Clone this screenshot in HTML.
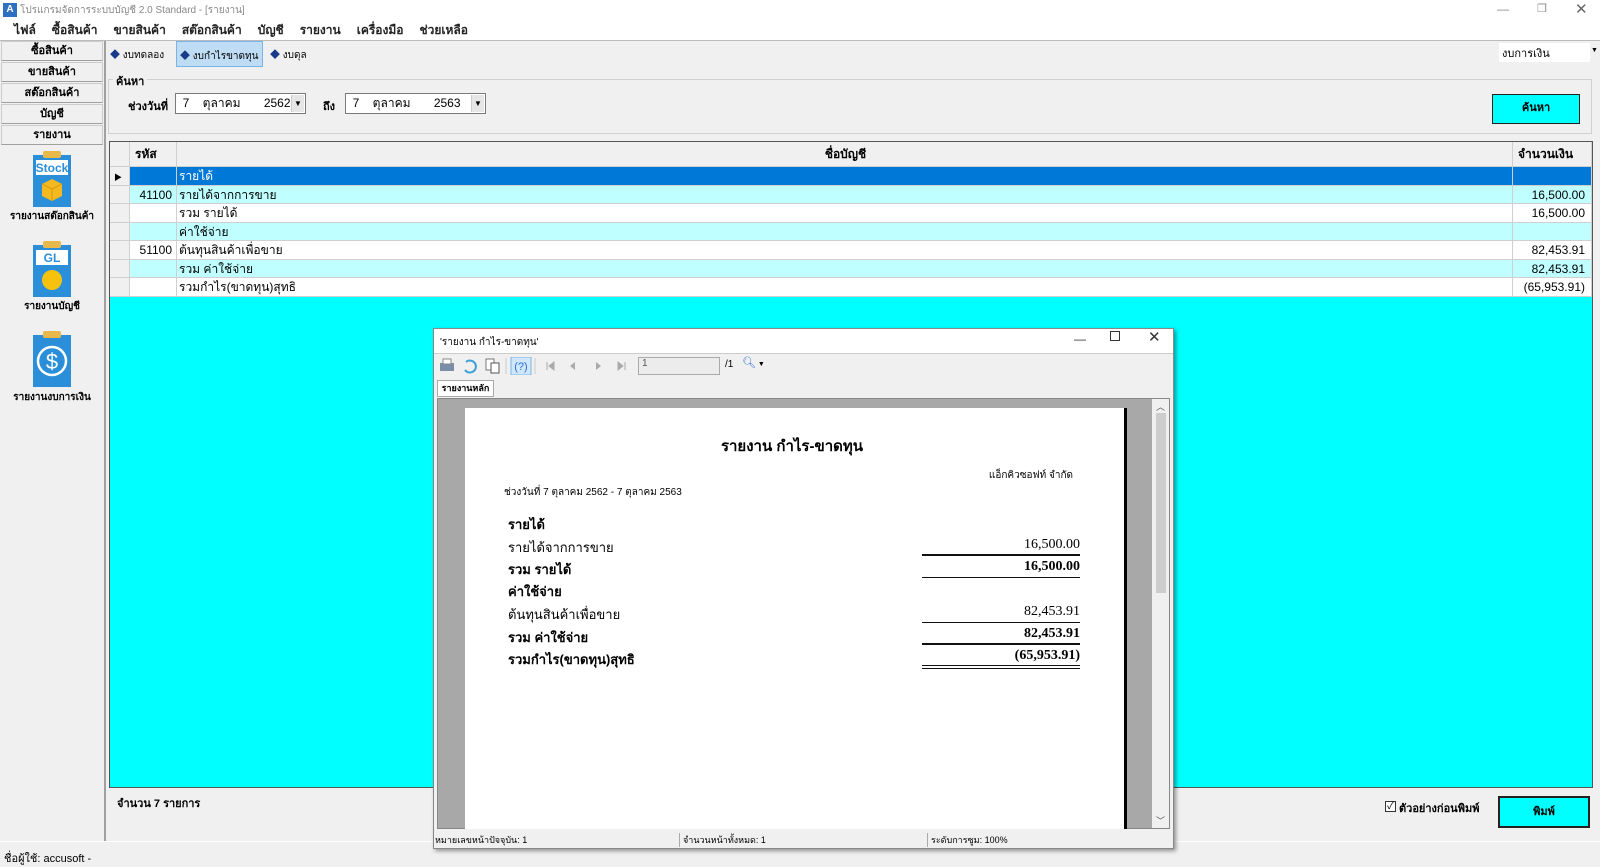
<!DOCTYPE html>
<html><head><meta charset="utf-8">
<style>
*{margin:0;padding:0;box-sizing:border-box}
body{width:1600px;height:866px;overflow:hidden;background:#f0f0f0;font-family:"Liberation Sans","Noto Sans CJK SC",sans-serif;font-size:12px;color:#000;position:relative}
.a{position:absolute;white-space:nowrap}
.menu span{margin-right:16px}
.lb{position:absolute;left:1px;width:102px;height:20px;background:#f0f0f0;border:1px solid #ccc;border-bottom-color:#a0a0a0;text-align:center;line-height:18px;font-weight:bold;font-size:11px}
.combo{position:absolute;height:21px;background:#fff;border:1px solid #7a7a7a;font-size:12px;line-height:19px;white-space:nowrap}
.combo .dd{position:absolute;right:1px;top:1px;width:13px;height:17px;background:#e6e6e6;border-left:1px solid #ccc;font-size:8px;text-align:center;line-height:17px}
.row{position:absolute;left:110px;width:1482px;height:18.5px;border-bottom:1px solid #cfcfcf;font-size:12px;line-height:18px}
.row div{position:absolute;top:0;height:100%;border-right:1px solid #cfcfcf}
.c0{left:0;width:20px;background:#f0f0f0}
.c1{left:20px;width:47px;text-align:right;padding-right:4px}
.c2{left:67px;width:1336px;padding-left:2px}
.c3{left:1403px;width:79px;text-align:right;padding-right:6px}
.btn{position:absolute;background:#00ffff;border:2px solid #222;text-align:center;font-weight:bold;font-size:11px}
.rp{position:absolute;font-size:13px;white-space:nowrap}
.amt{position:absolute;right:0;font-family:"Liberation Serif",serif;font-size:14px;text-align:right}
.ln{position:absolute;left:922px;width:158px;height:0;border-top:1px solid #111}
</style></head><body>
<!-- title bar -->
<div class="a" style="left:0;top:0;width:1600px;height:20px;background:#fff"></div>
<div class="a" style="left:3px;top:3px;width:14px;height:14px;background:#2d6fc0;color:#fff;font-size:10px;font-weight:bold;text-align:center;line-height:14px">A</div>
<div class="a" style="left:20px;top:3px;color:#888;font-size:10px">โปรแกรมจัดการระบบบัญชี 2.0 Standard - [รายงาน]</div>
<div class="a" style="left:1497px;top:2px;color:#888;font-size:12px">—</div>
<div class="a" style="left:1537px;top:2px;color:#888;font-size:11px">❐</div>
<div class="a" style="left:1575px;top:0px;color:#666;font-size:15px">✕</div>
<!-- menu -->
<div class="a menu" style="left:0;top:20px;width:1600px;height:21px;background:#fff;border-bottom:1px solid #bbb;padding-left:14px;line-height:20px;font-size:12px;font-weight:bold;color:#222"><span>ไฟล์</span><span>ซื้อสินค้า</span><span>ขายสินค้า</span><span>สต๊อกสินค้า</span><span>บัญชี</span><span>รายงาน</span><span>เครื่องมือ</span><span>ช่วยเหลือ</span></div>
<!-- left panel -->
<div class="a" style="left:104px;top:41px;width:2px;height:800px;background:#a0a0a0"></div>
<div class="lb" style="top:41px">ซื้อสินค้า</div>
<div class="lb" style="top:62px">ขายสินค้า</div>
<div class="lb" style="top:83px">สต๊อกสินค้า</div>
<div class="lb" style="top:104px">บัญชี</div>
<div class="lb" style="top:125px">รายงาน</div>
<!-- icons -->
<svg class="a" style="left:30px;top:150px" width="44" height="58"><rect x="3" y="5" width="38" height="52" fill="#2a8fd8"/><rect x="13" y="1" width="18" height="7" rx="2" fill="#e8b84a"/><rect x="6" y="10" width="32" height="15" fill="#fff"/><text x="22" y="22" font-size="12" font-weight="bold" fill="#2a8fd8" text-anchor="middle" font-family="Liberation Sans">Stock</text><path d="M12 34 L22 29 L32 34 L32 46 L22 51 L12 46Z" fill="#f3b91e"/><path d="M12 34 L22 39 L32 34 M22 39 V51" stroke="#d89a10" fill="none"/></svg>
<div class="a" style="left:0;top:209px;width:104px;text-align:center;font-size:10px;font-weight:bold">รายงานสต๊อกสินค้า</div>
<svg class="a" style="left:30px;top:240px" width="44" height="58"><rect x="3" y="5" width="38" height="52" fill="#2a8fd8"/><rect x="13" y="1" width="18" height="7" rx="2" fill="#e8b84a"/><rect x="6" y="10" width="32" height="15" fill="#fff"/><text x="22" y="22" font-size="12" font-weight="bold" fill="#2a8fd8" text-anchor="middle" font-family="Liberation Sans">GL</text><circle cx="22" cy="40" r="10" fill="#f7c20e"/></svg>
<div class="a" style="left:0;top:299px;width:104px;text-align:center;font-size:10px;font-weight:bold">รายงานบัญชี</div>
<svg class="a" style="left:30px;top:330px" width="44" height="58"><rect x="3" y="5" width="38" height="52" fill="#2a8fd8"/><rect x="13" y="1" width="18" height="7" rx="2" fill="#e8b84a"/><circle cx="22" cy="31" r="14" fill="none" stroke="#fff" stroke-width="2.5"/><text x="22" y="39" font-size="22" fill="#fff" text-anchor="middle" font-family="Liberation Sans">$</text></svg>
<div class="a" style="left:0;top:390px;width:104px;text-align:center;font-size:10px;font-weight:bold">รายงานงบการเงิน</div>
<!-- tabs -->
<div class="a" style="left:110px;top:46px;font-size:10px"><span style="color:#1a3a8a">◆</span> งบทดลอง</div>
<div class="a" style="left:176px;top:41px;width:87px;height:26px;background:#bfdcf5;border:1px solid #7ab4e6;font-size:10px;padding:5px 0 0 3px;overflow:hidden"><span style="color:#1a3a8a">◆</span> งบกำไรขาดทุน</div>
<div class="a" style="left:270px;top:46px;font-size:10px"><span style="color:#1a3a8a">◆</span> งบดุล</div>
<div class="a" style="left:1499px;top:43px;width:91px;height:19px;background:#fff;font-size:11px;padding:1px 3px">งบการเงิน</div>
<div class="a" style="left:1591px;top:47px;font-size:7px">▼</div>
<!-- search group -->
<div class="a" style="left:108px;top:79px;width:1484px;height:55px;border:1px solid #d0d0d0"></div>
<div class="a" style="left:113px;top:72px;background:#f0f0f0;padding:0 3px;font-size:11px;font-weight:bold">ค้นหา</div>
<div class="a" style="left:128px;top:97px;font-size:11px;font-weight:bold">ช่วงวันที่</div>
<div class="combo" style="left:175px;top:93px;width:131px">&nbsp;&nbsp;7&nbsp;&nbsp;&nbsp;&nbsp;ตุลาคม&nbsp;&nbsp;&nbsp;&nbsp;&nbsp;&nbsp;&nbsp;2562<div class="dd">▼</div></div>
<div class="a" style="left:323px;top:97px;font-size:11px;font-weight:bold">ถึง</div>
<div class="combo" style="left:345px;top:93px;width:141px">&nbsp;&nbsp;7&nbsp;&nbsp;&nbsp;&nbsp;ตุลาคม&nbsp;&nbsp;&nbsp;&nbsp;&nbsp;&nbsp;&nbsp;2563<div class="dd">▼</div></div>
<div class="btn" style="left:1492px;top:94px;width:88px;height:30px;line-height:26px;border-width:1px">ค้นหา</div>
<!-- grid -->
<div class="a" style="left:109px;top:141px;width:1484px;height:647px;border:1px solid #555;background:#00ffff"></div>
<div class="row" style="top:142px;height:25px;background:#f0f0f0;line-height:24px"><div class="c0"></div><div class="c1" style="text-align:left;padding-left:5px;font-weight:bold">รหัส</div><div class="c2" style="text-align:center;font-weight:bold">ชื่อบัญชี</div><div class="c3" style="text-align:left;padding-left:5px;font-weight:bold">จำนวนเงิน</div></div>
<div class="row" style="top:167px;background:#0078d7;color:#fff"><div class="c0" style="color:#fff;background:#f0f0f0"><span style="color:#000;font-size:8px;padding-left:4px">▶</span></div><div class="c1"></div><div class="c2">รายได้</div><div class="c3"></div></div>
<div class="row" style="top:185.5px;background:#c0ffff"><div class="c0"></div><div class="c1">41100</div><div class="c2">รายได้จากการขาย</div><div class="c3">16,500.00</div></div>
<div class="row" style="top:204px;background:#fff"><div class="c0"></div><div class="c1"></div><div class="c2">รวม รายได้</div><div class="c3">16,500.00</div></div>
<div class="row" style="top:222.5px;background:#c0ffff"><div class="c0"></div><div class="c1"></div><div class="c2">ค่าใช้จ่าย</div><div class="c3"></div></div>
<div class="row" style="top:241px;background:#fff"><div class="c0"></div><div class="c1">51100</div><div class="c2">ต้นทุนสินค้าเพื่อขาย</div><div class="c3">82,453.91</div></div>
<div class="row" style="top:259.5px;background:#c0ffff"><div class="c0"></div><div class="c1"></div><div class="c2">รวม ค่าใช้จ่าย</div><div class="c3">82,453.91</div></div>
<div class="row" style="top:278px;background:#fff"><div class="c0"></div><div class="c1"></div><div class="c2">รวมกำไร(ขาดทุน)สุทธิ</div><div class="c3">(65,953.91)</div></div>
<!-- bottom -->
<div class="a" style="left:117px;top:794px;font-size:11px;font-weight:bold">จำนวน 7 รายการ</div>
<div class="a" style="left:1385px;top:801px;width:11px;height:11px;border:1px solid #333;background:#fff;font-size:10px;line-height:9px;text-align:center">✓</div>
<div class="a" style="left:1399px;top:799px;font-size:11px;font-weight:bold">ตัวอย่างก่อนพิมพ์</div>
<div class="btn" style="left:1498px;top:796px;width:92px;height:32px;line-height:28px">พิมพ์</div>
<div class="a" style="left:0;top:841px;width:1600px;height:1px;background:#fff"></div>
<div class="a" style="left:4px;top:849px;font-size:11px">ชื่อผู้ใช้: accusoft -</div>
<!-- dialog -->
<div class="a" style="left:433px;top:328px;width:741px;height:521px;background:#f0f0f0;border:1px solid #888;box-shadow:2px 2px 4px rgba(0,0,0,.4)"></div>
<div class="a" style="left:434px;top:329px;width:739px;height:25px;background:#fff;border-bottom:1px solid #ccc"></div>
<div class="a" style="left:440px;top:335px;font-size:10px">'รายงาน กำไร-ขาดทุน'</div>
<div class="a" style="left:1074px;top:332px;font-size:12px;color:#333">—</div>
<div class="a" style="left:1110px;top:331px;width:10px;height:10px;border:1px solid #333"></div>
<div class="a" style="left:1148px;top:328px;font-size:15px;color:#333">✕</div>
<!-- toolbar -->
<svg class="a" style="left:438px;top:357px" width="340" height="18">
<rect x="2" y="6" width="14" height="8" fill="#7a8ea8"/><rect x="5" y="2" width="8" height="5" fill="#fff" stroke="#888"/>
<path d="M28 5a6 6 0 1 1 -1 8" stroke="#3aa0d8" stroke-width="2" fill="none"/>
<rect x="48" y="2" width="8" height="11" fill="#fff" stroke="#777"/><rect x="53" y="6" width="8" height="10" fill="#fff" stroke="#555"/>
<rect x="73" y="0" width="20" height="18" fill="#cfe6fb" stroke="#7ab4e6"/><text x="83" y="13" font-size="11" fill="#2a6fd0" text-anchor="middle" font-family="Liberation Sans">(?)</text>
<line x1="68" y1="1" x2="68" y2="17" stroke="#ccc"/><line x1="97" y1="1" x2="97" y2="17" stroke="#ccc"/>
<path d="M109 5v8M116 5l-5 4 5 4z" stroke="#aaa" fill="#aaa"/><path d="M137 5l-5 4 5 4z" fill="#aaa"/><path d="M158 5l5 4-5 4z" fill="#aaa"/><path d="M180 5l5 4-5 4zM187 5v8" stroke="#aaa" fill="#aaa"/>
</svg>
<div class="a" style="left:638px;top:357px;width:82px;height:18px;background:#ececec;border:1px solid #aaa;font-size:10px;padding-left:3px;color:#555">1</div>
<div class="a" style="left:725px;top:359px;font-size:10px">/1</div>
<div class="a" style="left:742px;top:356px;font-size:11px;color:#2a6fd0">🔍︎<span style="font-size:7px;color:#000"> ▼</span></div>
<div class="a" style="left:437px;top:380px;width:57px;height:17px;border:1px solid #aaa;background:#fff;font-size:9px;text-align:center;line-height:15px;font-weight:bold">รายงานหลัก</div>
<!-- preview -->
<div class="a" style="left:437px;top:398px;width:733px;height:431px;background:#a8a8a8;border:1px solid #888"></div>
<div class="a" style="left:465px;top:408px;width:662px;height:421px;background:#fff;border-right:3px solid #000"></div>
<div class="a" style="left:1152px;top:399px;width:17px;height:429px;background:#f0f0f0"></div>
<div class="a" style="left:1156px;top:413px;width:10px;height:180px;background:#cdcdcd"></div>
<div class="a" style="left:1156px;top:400px;font-size:9px;color:#555">︿</div>
<div class="a" style="left:1156px;top:814px;font-size:9px;color:#555">﹀</div>
<!-- paper content -->
<div class="a" style="left:692px;top:434px;width:200px;text-align:center;font-size:15px;font-weight:bold">รายงาน กำไร-ขาดทุน</div>
<div class="a" style="left:900px;top:468px;width:173px;text-align:right;font-size:10px">แอ็กคิวซอฟท์ จำกัด</div>
<div class="a" style="left:504px;top:485px;font-size:10px">ช่วงวันที่ 7 ตุลาคม 2562 - 7 ตุลาคม 2563</div>
<div class="rp" style="left:508px;top:514px;font-weight:bold">รายได้</div>
<div class="rp" style="left:508px;top:537px">รายได้จากการขาย</div>
<div class="rp" style="left:508px;top:559px;font-weight:bold">รวม รายได้</div>
<div class="rp" style="left:508px;top:581px;font-weight:bold">ค่าใช้จ่าย</div>
<div class="rp" style="left:508px;top:604px">ต้นทุนสินค้าเพื่อขาย</div>
<div class="rp" style="left:508px;top:627px;font-weight:bold">รวม ค่าใช้จ่าย</div>
<div class="rp" style="left:508px;top:649px;font-weight:bold">รวมกำไร(ขาดทุน)สุทธิ</div>
<div class="a" style="left:922px;top:536px;width:158px;height:130px">
<div class="amt" style="top:1px">16,500.00</div>
<div class="amt" style="top:23px;font-weight:bold">16,500.00</div>
<div class="amt" style="top:68px">82,453.91</div>
<div class="amt" style="top:90px;font-weight:bold">82,453.91</div>
<div class="amt" style="top:112px;font-weight:bold">(65,953.91)</div>
</div>
<div class="ln" style="top:554px;border-top-width:2px"></div>
<div class="ln" style="top:577px"></div>
<div class="ln" style="top:622px"></div>
<div class="ln" style="top:643px;border-top-width:2px"></div>
<div class="ln" style="top:665px"></div>
<div class="ln" style="top:668px"></div>
<!-- dialog status -->
<div class="a" style="left:435px;top:833px;width:737px;height:14px;font-size:9px;line-height:14px">
<div class="a" style="left:0;width:245px;height:14px;border-right:1px solid #aaa">หมายเลขหน้าปัจจุบัน: 1</div>
<div class="a" style="left:248px;width:245px;height:14px;border-right:1px solid #aaa">จำนวนหน้าทั้งหมด: 1</div>
<div class="a" style="left:496px;width:240px;height:14px">ระดับการซูม: 100%</div>
</div>
</body></html>
